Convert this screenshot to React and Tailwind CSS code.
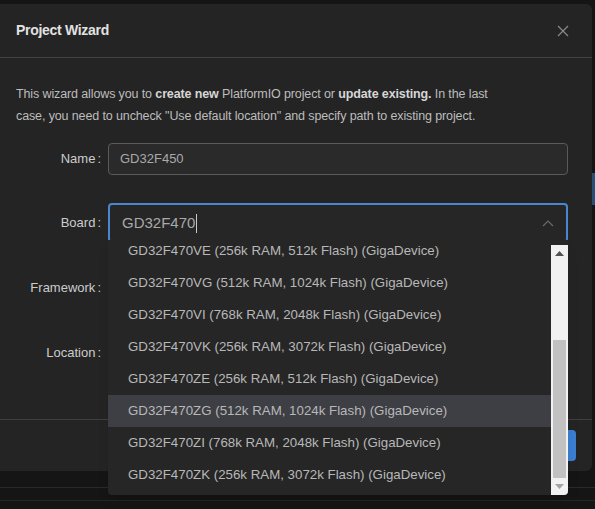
import React from 'react';

const boards = [
  'GD32F470VE (256k RAM, 512k Flash) (GigaDevice)',
  'GD32F470VG (512k RAM, 1024k Flash) (GigaDevice)',
  'GD32F470VI (768k RAM, 2048k Flash) (GigaDevice)',
  'GD32F470VK (256k RAM, 3072k Flash) (GigaDevice)',
  'GD32F470ZE (256k RAM, 512k Flash) (GigaDevice)',
  'GD32F470ZG (512k RAM, 1024k Flash) (GigaDevice)',
  'GD32F470ZI (768k RAM, 2048k Flash) (GigaDevice)',
  'GD32F470ZK (256k RAM, 3072k Flash) (GigaDevice)',
];

function Label({ children }) {
  return (
    <div className="w-[108px] pr-[7px] text-right text-[13px] text-[#cccccc] shrink-0">
      {children}
      <span className="ml-[2px]">:</span>
    </div>
  );
}

export default function App() {
  return (
    <div
      className="relative w-[595px] h-[509px] bg-[#151515] overflow-hidden"
      style={{ fontFamily: '"Liberation Sans", Arial, sans-serif' }}
    >
      {/* background window chrome below the dialog */}
      <div className="absolute left-0 right-0 top-[487px] h-px bg-[#2a2a2a]" />
      <div className="absolute left-0 right-0 top-[500px] h-px bg-[#262626]" />
      <div className="absolute right-0 top-[173px] w-[3px] h-[32px] bg-[#264f78]" />

      {/* Dialog */}
      <div className="absolute left-[-8px] top-[4px] w-[600px] h-[467px] bg-[#242424] rounded-md flex flex-col">
        <div className="h-[54px] flex items-center justify-between pl-[24px] pr-[23px] border-b border-[#414141]">
          <div className="text-[14px] font-bold tracking-[-0.3px] text-[#e2e2e2]">Project Wizard</div>
          <svg width="12" height="12" viewBox="0 0 12 12" className="text-[#8a8a8a]">
            <path d="M1 1 L11 11 M11 1 L1 11" stroke="currentColor" strokeWidth="1.2" fill="none" />
          </svg>
        </div>

        <div className="pl-[24px] pr-[20px] pt-[25px] text-[12.5px] tracking-[-0.12px] leading-[22px] text-[#bdbdbd]">
          This wizard allows you to <b className="text-[#d6d6d6]">create new</b> PlatformIO project or{' '}
          <b className="text-[#d6d6d6]">update existing.</b> In the last
          <br />
          case, you need to uncheck "Use default location" and specify path to existing project.
        </div>

        <div className="pl-[8px] flex flex-col">
          <div className="flex items-center mt-[16px]">
            <Label>Name</Label>
            <div className="w-[460px] h-[32px] rounded-[4px] border border-[#5a5a5a] bg-[#2a2a2a] flex items-center pl-[11px] text-[13px] text-[#a9a9a9]">
              GD32F450
            </div>
          </div>
          <div className="flex items-center mt-[28px]">
            <Label>Board</Label>
            <div className="w-[460px] h-[40px] rounded-[4px] border-2 border-[#4a86cf] bg-[#262626] flex items-center pl-[12px] pr-[12px] justify-between">
              <div className="flex items-center text-[15px] text-[#a9a9a9]">
                GD32F470
                <span className="w-px h-[19px] bg-[#c8c8c8] ml-[1px]" />
              </div>
              <svg width="12" height="8" viewBox="0 0 12 8">
                <path d="M1 7 L6 2 L11 7" stroke="#6a6a6a" strokeWidth="1.2" fill="none" />
              </svg>
            </div>
          </div>
          <div className="flex items-center mt-[25px] h-[40px]">
            <Label>Framework</Label>
          </div>
          <div className="flex items-center mt-[25px] h-[40px]">
            <Label>Location</Label>
          </div>
        </div>

        <div className="mt-auto h-[52px] border-t border-[#3f3f3f] flex items-center justify-end pr-[16px]">
          <div className="w-[76px] h-[31px] rounded-[4px] bg-[#3b7fd4]" />
        </div>
      </div>

      {/* Dropdown list */}
      <div className="absolute left-[108px] top-[240px] w-[460px] h-[255px] bg-[#262626] rounded-b-[4px] flex overflow-hidden shadow-lg">
        <div className="flex-1 overflow-hidden">
          <div className="mt-[-5px]">
            {boards.map((b) => (
              <div
                key={b}
                className={`h-[32px] flex items-center pl-[20px] text-[13.3px] text-[#b8b8b8] ${
                  b.startsWith('GD32F470ZG') ? 'bg-[#3e3f44]' : ''
                }`}
              >
                {b}
              </div>
            ))}
          </div>
        </div>
        <div className="w-[17px] mt-[5px] bg-[#f1f1f1] flex flex-col items-center">
          <div className="h-[17px] flex items-center justify-center">
            <svg width="9" height="5" viewBox="0 0 9 5">
              <path d="M0 5 L4.5 0 L9 5 Z" fill="#505050" />
            </svg>
          </div>
          <div className="mt-[78px] w-[13px] h-[138px] bg-[#c1c1c1]" />
          <div className="h-[17px] flex items-center justify-center">
            <svg width="9" height="5" viewBox="0 0 9 5">
              <path d="M0 0 L9 0 L4.5 5 Z" fill="#a3a3a3" />
            </svg>
          </div>
        </div>
      </div>
    </div>
  );
}
